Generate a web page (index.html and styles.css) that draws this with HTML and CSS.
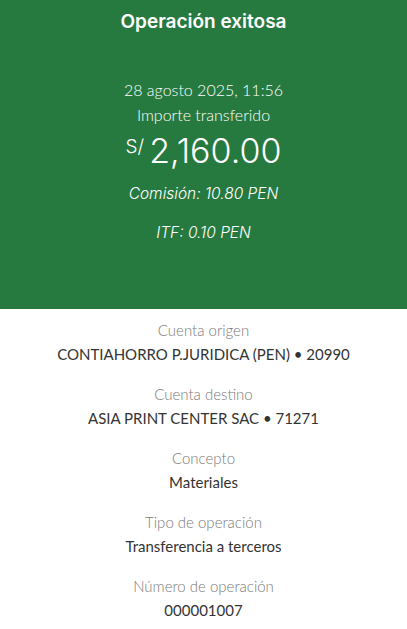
FILE: index.html
```html
<!DOCTYPE html>
<html lang="es">
<head>
<meta charset="utf-8">
<link rel="stylesheet" href="styles.css">
</head>
<body>
<header class="hero">
  <h1 class="title">Operación exitosa</h1>
  <div class="summary">
    <p class="date">28 agosto 2025, 11:56</p>
    <p class="caption">Importe transferido</p>
    <p class="amount"><span class="currency">S/</span><span class="value">2,160.00</span></p>
    <p class="fee">Comisión: 10.80 PEN</p>
    <p class="fee itf">ITF: 0.10 PEN</p>
  </div>
</header>
<main class="details">
  <div class="item"><span class="label">Cuenta origen</span><span class="val">CONTIAHORRO P.JURIDICA (PEN) • 20990</span></div>
  <div class="item"><span class="label">Cuenta destino</span><span class="val">ASIA PRINT CENTER SAC • 71271</span></div>
  <div class="item"><span class="label">Concepto</span><span class="val">Materiales</span></div>
  <div class="item"><span class="label">Tipo de operación</span><span class="val">Transferencia a terceros</span></div>
  <div class="item"><span class="label">Número de operación</span><span class="val">000001007</span></div>
</main>
</body>
</html>
```
FILE: styles.css
```css
* { box-sizing: border-box; }
html, body { margin: 0; padding: 0; }
body {
  width: 407px;
  background: #fff;
  font-family: Lato, "Open Sans", sans-serif;
  text-align: center;
}
p { margin: 0; }
.hero {
  background: #277a3f;
  color: #fff;
  height: 309px;
  padding-top: 9px;
}
.title {
  margin: 0;
  font-family: Inter, sans-serif;
  font-size: 19px;
  font-weight: 600;
  line-height: 26px;
}
.summary {
  margin-top: 42px;
  display: flex;
  flex-direction: column;
  align-items: center;
}
.date, .caption {
  font-size: 16px;
  line-height: 25px;
  font-weight: 300;
}
.amount {
  display: flex;
  align-items: flex-start;
  justify-content: center;
  margin-top: 3px;
  height: 46px;
}
.currency {
  font-family: Inter, sans-serif;
  font-weight: 300;
  font-size: 19px;
  line-height: 18px;
  margin-top: 8px;
  margin-right: 5px;
}
.value {
  font-family: Inter, sans-serif;
  font-weight: 300;
  font-size: 34px;
  line-height: 42px;
}
.fee {
  font-family: Inter, sans-serif;
  font-style: italic;
  font-weight: 300;
  font-size: 15.5px;
  line-height: 20px;
  margin-top: 8px;
}
.itf { margin-top: 19px; }
.details {
  display: flex;
  flex-direction: column;
  gap: 16px;
  padding-top: 9px;
}
.item {
  display: flex;
  flex-direction: column;
  align-items: center;
}
.label {
  color: #7a7a7a;
  font-size: 15px;
  line-height: 24px;
  font-weight: 300;
}
.val {
  color: #333;
  font-size: 15px;
  line-height: 24px;
  font-weight: 400;
}
```
